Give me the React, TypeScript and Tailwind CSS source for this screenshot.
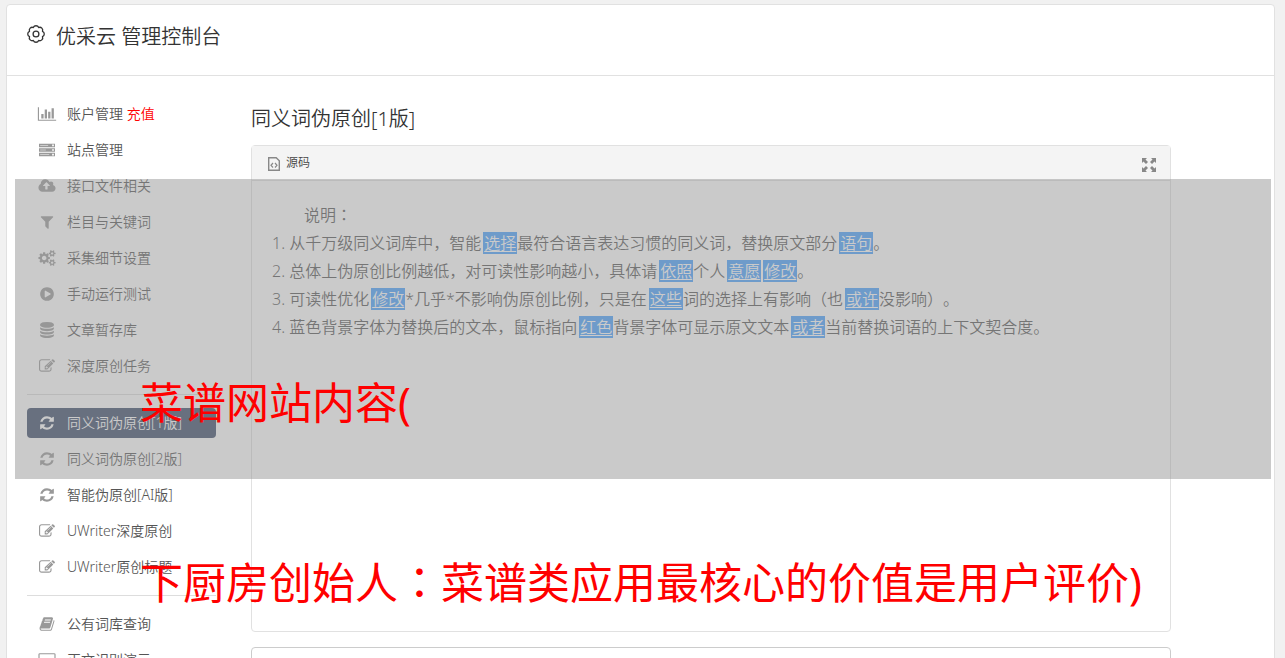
import type { ReactNode } from "react";

const cjk = "font-['Noto_Sans','Noto_Sans_CJK_SC',sans-serif]";

// Font Awesome 4 outlines, all on a 1792 unit em.
const glyphs = {
  chart: {
    box: "0 0 2048 1792",
    d: "M640 896v512H384V896h256zm384-512v1024H768V384h256zm1024 1152v128H0V128h128v1408h1920zm-640-896v768h-256V640h256zm384-384v1152h-256V256h256z",
  },
  server: {
    box: "0 0 1792 1792",
    d: "M0 192h1792v384H0zM128 352v64h896v-64zM1472 288v192h192V288zM0 704h1792v384H0zM128 864v64h640v-64zM1472 800v192h192V800zM0 1216h1792v384H0zM128 1376v64h1024v-64zM1472 1312v192h192v-192z",
  },
  upload: {
    box: "0 0 1920 1792",
    d: "M1280 864q0-14-9-23L919 489q-9-9-23-9t-23 9L522 840q-10 12-10 24 0 14 9 23t23 9h224v352q0 13 9.5 22.5t22.5 9.5h192q13 0 22.5-9.5t9.5-22.5V896h224q13 0 22.5-9.5t9.5-22.5zm640 288q0 159-112.5 271.5T1536 1536H448q-185 0-316.5-131.5T0 1088q0-130 70-240t188-165q-2-30-2-43 0-212 150-362t362-150q156 0 285.5 87T1242 446q71-62 166-62 106 0 181 75t75 181q0 76-41 138 130 31 213.5 135.5T1920 1152z",
  },
  filter: {
    box: "0 0 1792 1792",
    d: "M1595 295q17 41-14 70l-493 493v742q0 42-39 59-13 5-25 5-27 0-45-19l-256-256q-19-19-19-45V858L211 365q-31-29-14-70 17-39 59-39h1280q42 0 59 39z",
  },
  cogs: {
    box: "0 0 1920 1792",
    d: "M896 896q0-106-75-181t-181-75-181 75-75 181 75 181 181 75 181-75 75-181zm768 512q0-52-38-90t-90-38-90 38-38 90q0 53 37.500 90.500t90.500 37.500 90.500-37.500 37.500-90.500zm0-1024q0-52-38-90t-90-38-90 38-38 90q0 53 37.500 90.500t90.500 37.500 90.500-37.500 37.500-90.500zm-384 421v185q0 10-7 19.500t-16 10.500l-155 24q-11 35-32 76 34 48 90 115 7 11 7 20 0 12-7 19-23 30-82.500 89.500t-78.500 59.500q-11 0-21-7l-115-90q-37 19-77 31-11 108-23 155-7 24-30 24H547q-11 0-20-7.500t-10-17.500l-23-153q-34-10-75-31l-118 89q-7 7-20 7-11 0-21-8-144-133-144-160 0-9 7-19 10-14 41-53t47-61q-23-44-35-82l-152-24q-10-1-17-9.500T0 987V802q0-10 7-19.500t16-10.500l155-24q11-35 32-76-34-48-90-115-7-11-7-20 0-12 7-20 22-30 82-89t79-59q11 0 21 7l115 90q34-18 77-32 11-108 23-154 7-24 30-24h186q11 0 20 7.500t10 17.500l23 153q34 10 75 31l118-89q8-7 20-7 11 0 21 8 144 133 144 160 0 8-7 19-12 16-42 54t-45 60q23 48 34 82l152 23q10 2 17 10.500t7 19.500zm640 533v140q0 16-149 31-12 27-30 52 51 113 51 138 0 4-4 7-122 71-124 71-8 0-46-47t-52-68q-20 2-30 2t-30-2q-14 21-52 68t-46 47q-2 0-124-71-4-3-4-7 0-25 51-138-18-25-30-52-149-15-149-31v-140q0-16 149-31 13-29 30-52-51-113-51-138 0-4 4-7 4-2 35-20t59-34 30-16q8 0 46 46.500t52 67.500q20-2 30-2t30 2q51-71 92-112l6-2q4 0 124 70 4 3 4 7 0 25-51 138 17 23 30 52 149 15 149 31zm0-1024v140q0 16-149 31-12 27-30 52 51 113 51 138 0 4-4 7-122 71-124 71-8 0-46-47t-52-68q-20 2-30 2t-30-2q-14 21-52 68t-46 47q-2 0-124-71-4-3-4-7 0-25 51-138-18-25-30-52-149-15-149-31V314q0-16 149-31 13-29 30-52-51-113-51-138 0-4 4-7 4-2 35-20t59-34 30-16q8 0 46 46.500t52 67.500q20-2 30-2t30 2q51-71 92-112l6-2q4 0 124 70 4 3 4 7 0 25-51 138 17 23 30 52 149 15 149 31z",
  },
  play: {
    box: "0 0 1792 1792",
    d: "M896 128q209 0 385.5 103T1561 510.5 1664 896t-103 385.5-279.5 279.5T896 1664t-385.5-103T231 1281.5 128 896t103-385.5T510.5 231 896 128zm384 823q32-18 32-55t-32-55L736 521q-31-19-64-1-32 19-32 56v640q0 37 32 56 16 8 32 8 17 0 32-9z",
  },
  database: {
    box: "0 0 1792 1792",
    d: "M896 768q237 0 443-43t325-127v170q0 69-103 128t-280 93.5-385 34.5-385-34.5T231 896 128 768V598q119 84 325 127t443 43zm0 768q237 0 443-43t325-127v170q0 69-103 128t-280 93.5-385 34.5-385-34.5-280-93.5-103-128v-170q119 84 325 127t443 43zm0-384q237 0 443-43t325-127v170q0 69-103 128t-280 93.5-385 34.5-385-34.5-280-93.5-103-128V982q119 84 325 127t443 43zM896 0q208 0 385 34.5t280 93.5 103 128v128q0 69-103 128t-280 93.5T896 640t-385-34.5T231 512 128 384V256q0-69 103-128t280-93.5T896 0z",
  },
  edit: {
    box: "0 0 1792 1792",
    d: "M888 1184l116-116-152-152-116 116v56h96v96h56zm440-720q-16-16-33 1L945 815q-17 17-1 33t33-1l350-350q17-17 1-33zm80 594v190q0 119-84.5 203.5T1120 1536H288q-119 0-203.5-84.5T0 1248V416q0-119 84.5-203.5T288 128h832q63 0 117 25 15 7 18 23 3 17-9 29l-49 49q-14 14-32 8-23-6-45-6H288q-66 0-113 47t-47 113v832q0 66 47 113t113 47h832q66 0 113-47t47-113v-126q0-13 9-22l64-64q15-15 35-7t20 29zm-96-738l288 288-672 672H640V928zm444 132l-92 92-288-288 92-92q28-28 68-28t68 28l152 152q28 28 28 68t-28 68z",
  },
  refresh: {
    box: "0 0 1792 1792",
    d: "M1639 1056q0 5-1 7-64 268-268 434.5T892 1664q-146 0-282.5-55T366 1452l-129 129q-19 19-45 19t-45-19-19-45v-448q0-26 19-45t45-19h448q26 0 45 19t19 45-19 45l-137 137q71 66 161 102t187 36q134 0 250-65t186-179q11-17 53-117 8-23 30-23h192q13 0 22.5 9.5t9.5 22.5zm25-800v448q0 26-19 45t-45 19h-448q-26 0-45-19t-19-45 19-45l138-138Q1097 384 896 384q-134 0-250 65T460 628q-11 17-53 117-8 23-30 23H178q-13 0-22.5-9.5T146 736v-7q65-268 270-434.5T896 128q146 0 284 55.5T1425 340l130-129q19-19 45-19t45 19 19 45z",
  },
  book: {
    box: "0 0 1792 1792",
    d: "M1703 478q40 57 18 129l-275 906q-19 64-76.5 107.5T1247 1664H324q-77 0-148.5-53.5T76 1479q-24-67-2-127 0-4 3-27t4-37q1-8-3-21.5t-3-19.5q2-11 8-21t16.5-23.5T116 1179q23-38 45-91.5t30-91.5q3-10 .5-30t-.5-28q3-11 17-28t17-23q21-36 42-92t25-90q1-9-2.5-32t.5-28q4-13 22-30.5t22-22.5q19-26 42.5-84.5T404 411q1-8-3-25.5t-2-26.5q2-8 9-18t18-23 17-21q8-12 16.5-30.5t15-35 16-36 19.5-32 26.5-23.5 36-11.5T620 134l-1 3q38-9 51-9h761q74 0 114 56t18 130l-274 906q-36 119-71.5 153.5T1089 1408H220q-27 0-38 15-11 16-1 43 24 70 144 70h923q29 0 56-15.500t35-41.500l300-987q7-22 5-57 38 15 59 43zM639 480q-4 13 2 22.5t20 9.500h608q13 0 25.500-9.500T1311 480l21-64q4-13-2-22.500t-20-9.500H702q-13 0-25.500 9.500T660 416zm-83 256q-4 13 2 22.500t20 9.500h608q13 0 25.500-9.500T1228 736l21-64q4-13-2-22.500t-20-9.500H619q-13 0-25.500 9.500T577 672z",
  },
  desktop: {
    box: "0 0 1920 1792",
    d: "M160 128h1600q66 0 113 47t47 113v1088q0 66-47 113t-113 47H160q-66 0-113-47T0 1376V288q0-66 47-113t113-47zm0 128q-13 0-22.5 9.500T128 288v832q0 13 9.500 22.500t22.500 9.500h1600q13 0 22.500-9.500t9.500-22.500V288q0-13-9.500-22.500T1760 256z",
  },
};

type GlyphName = keyof typeof glyphs;

type NavItem = {
  icon: GlyphName;
  label: string;
  note?: string;
  active?: boolean;
};

const groups: NavItem[][] = [
  [
    { icon: "chart", label: "账户管理", note: "充值" },
    { icon: "server", label: "站点管理" },
    { icon: "upload", label: "接口文件相关" },
    { icon: "filter", label: "栏目与关键词" },
    { icon: "cogs", label: "采集细节设置" },
    { icon: "play", label: "手动运行测试" },
    { icon: "database", label: "文章暂存库" },
    { icon: "edit", label: "深度原创任务" },
  ],
  [
    { icon: "refresh", label: "同义词伪原创[1版]", active: true },
    { icon: "refresh", label: "同义词伪原创[2版]" },
    { icon: "refresh", label: "智能伪原创[AI版]" },
    { icon: "edit", label: "UWriter深度原创" },
    { icon: "edit", label: "UWriter原创标题" },
  ],
  [
    { icon: "book", label: "公有词库查询" },
    { icon: "desktop", label: "正文识别演示" },
  ],
];

function Glyph({ name }: { name: GlyphName }) {
  return (
    <svg
      viewBox={glyphs[name].box}
      aria-hidden="true"
      className="h-4 w-5 flex-none fill-current"
    >
      <path fillRule="evenodd" d={glyphs[name].d} />
    </svg>
  );
}

function NavLink({ item }: { item: NavItem }) {
  return (
    <a
      href="#"
      aria-current={item.active ? "page" : undefined}
      className={`flex h-[30px] items-center gap-[10px] rounded pl-[10px] text-sm whitespace-nowrap ${
        item.active ? "bg-[#3a4a68] text-white" : "text-[#555]"
      }`}
    >
      <span className={item.active ? "text-white" : "text-[#999]"}>
        <Glyph name={item.icon} />
      </span>
      <span>
        {item.label}
        {item.note ? <span className="text-[#f00]"> {item.note}</span> : null}
      </span>
    </a>
  );
}

// A replaced word; the underlined part sits on the blue background.
function Word({ children }: { children: ReactNode }) {
  return (
    <u className="ml-0.5 bg-[#46a0ff] px-px text-white underline underline-offset-2">
      {children}
    </u>
  );
}

// The TC face centres this mark in its cell.
function Colon() {
  return (
    <span lang="zh-TW" className="font-['Noto_Sans_CJK_TC',sans-serif] leading-none">
      ：
    </span>
  );
}

function GearIcon() {
  return (
    <svg
      viewBox="0 0 18 18"
      aria-hidden="true"
      className="h-[18px] w-[18px] fill-none stroke-current"
    >
      <path
        strokeWidth="1.3"
        strokeLinejoin="round"
        d="M6.320 2.530A2.900 2.900 0 0 1 11.680 2.530A2.900 2.900 0 0 1 15.470 6.320A2.900 2.900 0 0 1 15.470 11.680A2.900 2.900 0 0 1 11.680 15.470A2.900 2.900 0 0 1 6.320 15.470A2.900 2.900 0 0 1 2.530 11.680A2.900 2.900 0 0 1 2.530 6.320A2.900 2.900 0 0 1 6.320 2.530Z"
      />
      <circle cx="9" cy="9" r="2.900" strokeWidth="1.300" />
    </svg>
  );
}

function Editor() {
  return (
    <section className="h-[487px] rounded border border-[#e1e1e1]">
      <div className="flex h-[35px] items-center justify-between border-b border-[#e1e1e1] bg-[#f4f4f4] pr-3 pl-4">
        <button type="button" className="flex items-center gap-1.5 text-xs text-[#444]">
          <svg
            viewBox="0 0 12 14"
            aria-hidden="true"
            className="mt-0.5 h-[14px] w-3 fill-none stroke-[#888]"
          >
            <path d="M.7.7h7.500l3.100 3.100v9.500H.7z" strokeWidth="1.400" />
            <path d="M5 6 3 8.300l2 2.200M7 6l2 2.300-2 2.200" strokeWidth="1.200" />
          </svg>
          源码
        </button>
        <button type="button" aria-label="全屏">
          <svg viewBox="0 0 14 14" aria-hidden="true" className="mx-0.5 mt-1 size-[14px] fill-[#888]">
            <path d="M0 0h5L3.500 1.500 6 4 4 6 1.500 3.500 0 5zM14 0v5l-1.500-1.500L10 6 8 4l2.500-2.500L9 0zM0 14V9l1.500 1.500L4 8l2 2-2.500 2.500L5 14zM14 14H9l1.500-1.500L8 10l2-2 2.500 2.500L14 9z" />
          </svg>
        </button>
      </div>
      <div className="px-5 pt-5 text-base leading-7 text-[#555]">
        <p className="indent-8">
          说明
          <Colon />
        </p>
        <ol className="list-inside whitespace-nowrap">
          <li>
            1. 从千万级同义词库中，智能<Word>选择</Word>最符合语言表达习惯的同义词，替换原文部分
            <Word>语句</Word>。
          </li>
          <li>
            2. 总体上伪原创比例越低，对可读性影响越小，具体请<Word>依照</Word>个人
            <Word>意愿</Word>
            <Word>修改</Word>。
          </li>
          <li>
            3. 可读性优化<Word>修改</Word>*几乎*不影响伪原创比例，只是在<Word>这些</Word>
            词的选择上有影响（也<Word>或许</Word>没影响）。
          </li>
          <li>
            4. 蓝色背景字体为替换后的文本，鼠标指向<Word>红色</Word>背景字体可显示原文文本
            <Word>或者</Word>当前替换词语的上下文契合度。
          </li>
        </ol>
      </div>
    </section>
  );
}

export default function App() {
  return (
    <div
      lang="zh-CN"
      className={`relative h-screen overflow-hidden bg-[#f1f1f1] pt-1 pr-[10px] pl-1.5 font-[350] [text-spacing-trim:space-all] ${cjk}`}
    >
      <div className="min-h-full rounded-t border border-[#e1e1e1] bg-white">
        <header className="flex h-[71px] items-start gap-[11px] border-b border-[#e1e1e1] pt-4 pl-5 text-[#333]">
          <span className="pt-1">
            <GearIcon />
          </span>
          <h1 className="text-xl leading-8">优采云 管理控制台</h1>
        </header>
        <div className="flex gap-[35px] pr-[103px] pl-5">
          <nav className="w-[189px] flex-none pt-[23px]">
            {groups.map((group, index) => (
              <ul
                key={index}
                className={`flex flex-col gap-1.5 ${
                  index > 0 ? "mt-[13px] border-t border-[#ddd] pt-[13px]" : ""
                }`}
              >
                {group.map((item) => (
                  <li key={item.label}>
                    <NavLink item={item} />
                  </li>
                ))}
              </ul>
            ))}
          </nav>
          <main className="min-w-0 flex-1 pt-7">
            <h2 className="mb-[11px] text-xl leading-[30px] text-[#333]">同义词伪原创[1版]</h2>
            <Editor />
            <textarea
              aria-label="原文"
              className="mt-[15px] block h-40 w-full resize-none rounded border border-[#ccc]"
            />
          </main>
        </div>
      </div>

      {/* caption band laid over the console */}
      <div className="absolute top-[179px] right-[14px] left-[15px] h-[300px] bg-[#969696]/50" />
      <p className="absolute top-[373px] left-[140px] text-[43px] leading-[60px] font-normal whitespace-nowrap text-[#f00]">
        菜谱网站内容(
      </p>
      <p className="absolute top-[553px] left-[140px] text-[43px] leading-[60px] font-normal whitespace-nowrap text-[#f00]">
        下厨房创始人
        <Colon />
        菜谱类应用最核心的价值是用户评价)
      </p>
    </div>
  );
}
